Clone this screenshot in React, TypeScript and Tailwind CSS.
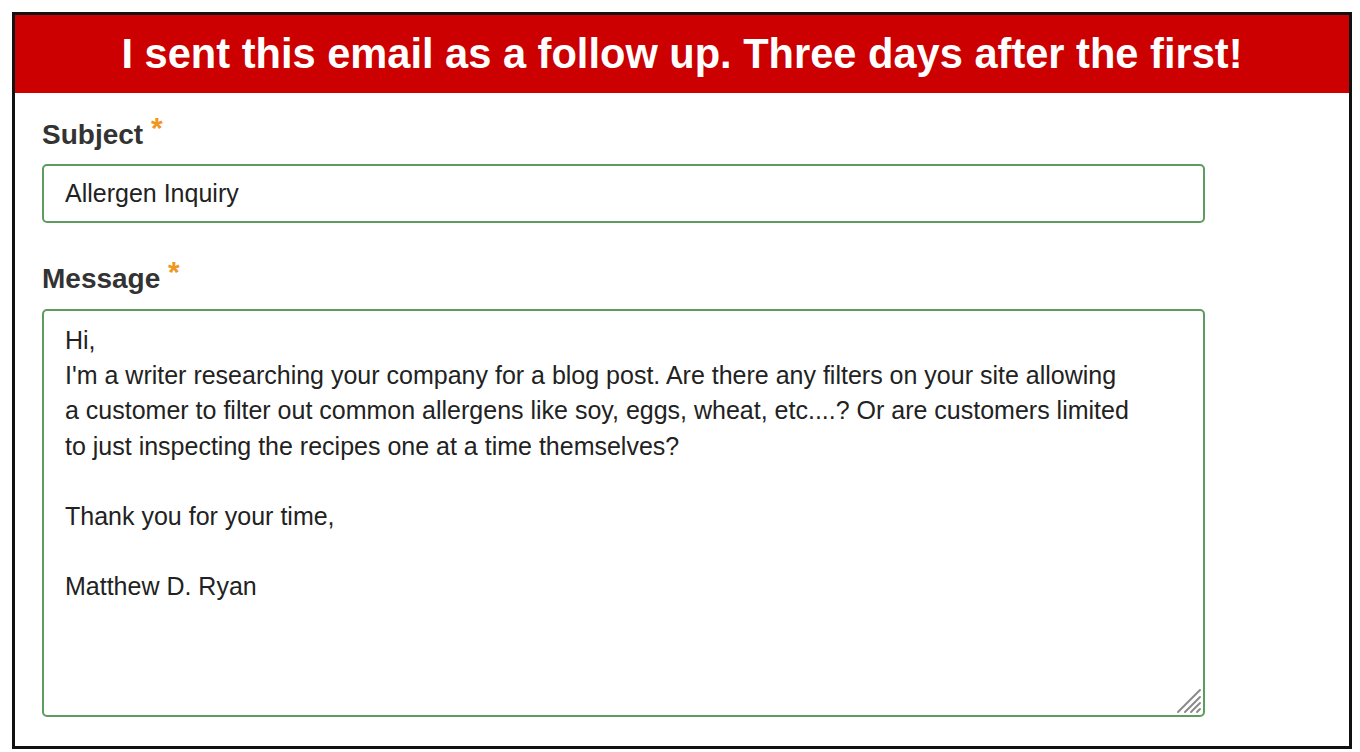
export default function App() {
  const message = [
    'Hi,',
    "I'm a writer researching your company for a blog post. Are there any filters on your site allowing",
    'a customer to filter out common allergens like soy, eggs, wheat, etc....? Or are customers limited',
    'to just inspecting the recipes one at a time themselves?',
    '',
    'Thank you for your time,',
    '',
    'Matthew D. Ryan',
  ].join('\n')

  return (
    <div className="h-[752px] w-[1360px] bg-white pl-[12px] pt-[12px] font-['Liberation_Sans',Arial,sans-serif]">
      <div className="flex h-[737px] w-[1340px] flex-col border-[3px] border-[#111111] bg-white">
        <div className="flex h-[78px] items-center justify-center bg-[#cc0000]">
          <h1 className="text-[41.6px] leading-none font-bold text-white">
            I sent this email as a follow up. Three days after the first!
          </h1>
        </div>

        <div className="flex flex-col pl-[27px] pt-[25px]">
          <label className="h-[32px] text-[28px] leading-[32px] font-bold text-[#333333]">
            Subject{' '}
            <span className="relative top-[-6px] text-[30px] text-[#f0961e]">*</span>
          </label>
          <input
            readOnly
            value="Allergen Inquiry"
            className="mt-[14px] h-[59px] w-[1163px] rounded-[5px] border-2 border-[#5e9b5e] bg-white px-[21px] text-[25px] text-[#222222] outline-none font-['Liberation_Sans',Arial,sans-serif]"
          />

          <label className="mt-[39px] h-[32px] text-[28px] leading-[32px] font-bold text-[#333333]">
            Message{' '}
            <span className="relative top-[-6px] text-[30px] text-[#f0961e]">*</span>
          </label>
          <div className="relative mt-[15px] h-[408px] w-[1163px]">
            <textarea
              readOnly
              wrap="off"
              value={message}
              className="h-full w-full resize-none overflow-hidden rounded-[5px] border-2 border-[#5e9b5e] bg-white px-[21px] pt-[12px] text-[25px] leading-[35.2px] text-[#222222] outline-none font-['Liberation_Sans',Arial,sans-serif]"
            />
            {/* resize grip */}
            <svg
              className="absolute right-[3px] bottom-[3px]"
              width="26"
              height="26"
              viewBox="0 0 26 26"
            >
              <g stroke="#8a8a8a" strokeWidth="2" strokeLinecap="round">
                <line x1="2" y1="24" x2="24" y2="2" />
                <line x1="9" y1="24" x2="24" y2="9" />
                <line x1="15" y1="24" x2="24" y2="15" />
                <line x1="21" y1="24" x2="24" y2="21" />
              </g>
            </svg>
          </div>
        </div>
      </div>
    </div>
  )
}
